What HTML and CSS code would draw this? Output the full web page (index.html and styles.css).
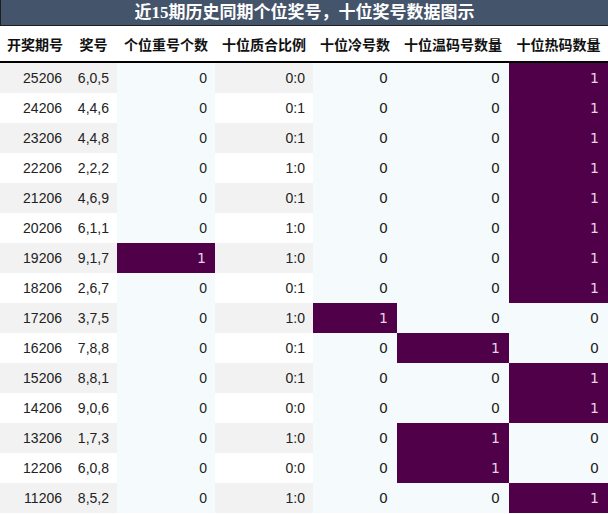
FILE: index.html
```html
<!DOCTYPE html>
<html lang="zh">
<head>
<meta charset="utf-8">
<title>近15期历史同期个位奖号，十位奖号数据图示</title>
<link rel="stylesheet" href="styles.css">
</head>
<body>
<div class="wrap">
  <div class="title">近15期历史同期个位奖号，十位奖号数据图示</div>
  <table class="grid">
    <colgroup>
      <col class="w1"><col class="w2"><col class="w3"><col class="w4"><col class="w5"><col class="w6"><col class="w7">
    </colgroup>
    <thead>
      <tr>
        <th>开奖期号</th><th>奖号</th><th>个位重号个数</th><th>十位质合比例</th><th>十位冷号数</th><th>十位温码号数量</th><th>十位热码数量</th>
      </tr>
    </thead>
    <tbody>
      <tr><td>25206</td><td>6,0,5</td><td class="lb">0</td><td>0:0</td><td class="lb dv">0</td><td class="lb dv">0</td><td class="hot dv">1</td></tr>
      <tr><td>24206</td><td>4,4,6</td><td class="lb">0</td><td>0:1</td><td class="lb dv">0</td><td class="lb dv">0</td><td class="hot dv">1</td></tr>
      <tr><td>23206</td><td>4,4,8</td><td class="lb">0</td><td>0:1</td><td class="lb dv">0</td><td class="lb dv">0</td><td class="hot dv">1</td></tr>
      <tr><td>22206</td><td>2,2,2</td><td class="lb">0</td><td>1:0</td><td class="lb dv">0</td><td class="lb dv">0</td><td class="hot dv">1</td></tr>
      <tr><td>21206</td><td>4,6,9</td><td class="lb">0</td><td>0:1</td><td class="lb dv">0</td><td class="lb dv">0</td><td class="hot dv">1</td></tr>
      <tr><td>20206</td><td>6,1,1</td><td class="lb">0</td><td>1:0</td><td class="lb dv">0</td><td class="lb dv">0</td><td class="hot dv">1</td></tr>
      <tr><td>19206</td><td>9,1,7</td><td class="hot dv">1</td><td>1:0</td><td class="lb dv">0</td><td class="lb dv">0</td><td class="hot dv">1</td></tr>
      <tr><td>18206</td><td>2,6,7</td><td class="lb">0</td><td>0:1</td><td class="lb dv">0</td><td class="lb dv">0</td><td class="hot dv">1</td></tr>
      <tr><td>17206</td><td>3,7,5</td><td class="lb">0</td><td>1:0</td><td class="hot dv">1</td><td class="lb dv">0</td><td class="lb dv">0</td></tr>
      <tr><td>16206</td><td>7,8,8</td><td class="lb">0</td><td>0:1</td><td class="lb dv">0</td><td class="hot dv">1</td><td class="lb dv">0</td></tr>
      <tr><td>15206</td><td>8,8,1</td><td class="lb">0</td><td>0:1</td><td class="lb dv">0</td><td class="lb dv">0</td><td class="hot dv">1</td></tr>
      <tr><td>14206</td><td>9,0,6</td><td class="lb">0</td><td>0:0</td><td class="lb dv">0</td><td class="lb dv">0</td><td class="hot dv">1</td></tr>
      <tr><td>13206</td><td>1,7,3</td><td class="lb">0</td><td>1:0</td><td class="lb dv">0</td><td class="hot dv">1</td><td class="lb dv">0</td></tr>
      <tr><td>12206</td><td>6,0,8</td><td class="lb">0</td><td>0:0</td><td class="lb dv">0</td><td class="hot dv">1</td><td class="lb dv">0</td></tr>
      <tr><td>11206</td><td>8,5,2</td><td class="lb">0</td><td>1:0</td><td class="lb dv">0</td><td class="lb dv">0</td><td class="hot dv">1</td></tr>
    </tbody>
  </table>
</div>
</body>
</html>
```

FILE: styles.css
```css
html, body {
  margin: 0;
  padding: 0;
  background: #ffffff;
}

.wrap {
  width: 608px;
}

.title {
  height: 26px;
  line-height: 26px;
  background: #44546a;
  border-bottom: 1px solid #1e1e1e;
  color: #ffffff;
  text-align: center;
  font-family: "Liberation Serif", "Noto Sans CJK SC", serif;
  font-weight: bold;
  font-size: 17px;
  box-sizing: border-box;
  border-left: 1px solid #1e1e1e;
}

.grid {
  width: 608px;
  border-collapse: collapse;
  table-layout: fixed;
  font-family: "Liberation Sans", "Noto Sans CJK SC", sans-serif;
  font-size: 14px;
  color: #222222;
}

.w1 { width: 70px; }
.w2 { width: 47px; }
.w3 { width: 98px; }
.w4 { width: 98px; }
.w5 { width: 84px; }
.w6 { width: 112px; }
.w7 { width: 99px; }

.grid th {
  height: 35px;
  padding: 0;
  font-weight: bold;
  font-size: 14px;
  color: #111111;
  text-align: center;
  white-space: nowrap;
  border-bottom: 2px solid #000000;
  background: #ffffff;
}

.grid td {
  height: 30px;
  padding: 0 8px 0 0;
  text-align: right;
  white-space: nowrap;
}

.grid tbody tr:nth-child(odd) td {
  background: #f2f2f2;
}

.grid tbody tr:nth-child(even) td {
  background: #ffffff;
}

.grid tbody tr td.lb {
  background: #f5fbfc;
}

.grid tbody tr td.hot {
  background: #4f0049;
  color: #e6d3e4;
}

.grid td.dv {
  font-family: "DejaVu Sans", sans-serif;
  font-size: 14px;
  padding-right: 9px;
}
```
